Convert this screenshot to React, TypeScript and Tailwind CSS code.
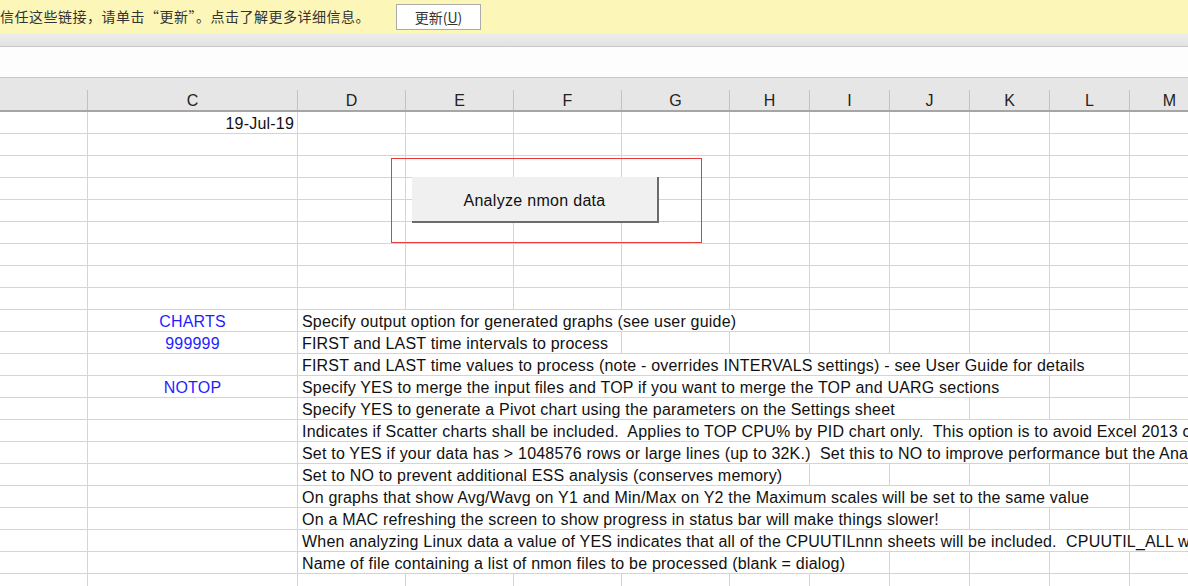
import React from 'react'

const COLS = ['', 'C', 'D', 'E', 'F', 'G', 'H', 'I', 'J', 'K', 'L', 'M']

const SPAN: Record<number, string> = {
  3: 'col-span-3',
  5: 'col-span-5',
  6: 'col-span-6',
  7: 'col-span-7',
  8: 'col-span-8',
  9: 'col-span-9',
  10: 'col-span-10',
}

interface Row {
  c?: string
  date?: boolean
  d?: string
  span?: number
}

const rows: Row[] = [
  { c: '19-Jul-19', date: true },
  {},
  {},
  {},
  {},
  {},
  {},
  {},
  {},
  { c: 'CHARTS', d: 'Specify output option for generated graphs (see user guide)', span: 5 },
  { c: '999999', d: 'FIRST and LAST time intervals to process', span: 3 },
  { d: 'FIRST and LAST time values to process (note - overrides INTERVALS settings) - see User Guide for details', span: 9 },
  { c: 'NOTOP', d: 'Specify YES to merge the input files and TOP if you want to merge the TOP and UARG sections', span: 8 },
  { d: 'Specify YES to generate a Pivot chart using the parameters on the Settings sheet', span: 7 },
  { d: 'Indicates if Scatter charts shall be included.  Applies to TOP CPU% by PID chart only.  This option is to avoid Excel 2013 crashing', span: 10 },
  { d: 'Set to YES if your data has > 1048576 rows or large lines (up to 32K.)  Set this to NO to improve performance but the Analyser may fail', span: 10 },
  { d: 'Set to NO to prevent additional ESS analysis (conserves memory)', span: 5 },
  { d: 'On graphs that show Avg/Wavg on Y1 and Min/Max on Y2 the Maximum scales will be set to the same value', span: 9 },
  { d: 'On a MAC refreshing the screen to show progress in status bar will make things slower!', span: 7 },
  { d: 'When analyzing Linux data a value of YES indicates that all of the CPUUTILnnn sheets will be included.  CPUUTIL_ALL will always be included', span: 10 },
  { d: 'Name of file containing a list of nmon files to be processed (blank = dialog)', span: 6 },
  {},
]

const cell = 'h-[22px] border-r border-b border-[#d4d4d4] leading-[21px] pt-[1px] whitespace-pre overflow-hidden tracking-[0.2px]'

function SheetRow({ row }: { row: Row }) {
  const span = row.span ?? 1
  const rest = 10 - span
  return (
    <>
      <div className={cell} />
      <div
        className={
          cell +
          (row.date ? ' text-right pr-[3px] text-[#111]' : ' text-center text-[#1f1fff]')
        }
      >
        {row.c}
      </div>
      <div className={cell + ' pl-[4px] text-[#111] ' + (SPAN[span] ?? '')}>
        {row.d}
      </div>
      {Array.from({ length: rest }).map((_, i) => (
        <div key={i} className={cell} />
      ))}
    </>
  )
}

export default function App() {
  return (
    <div className="w-[1188px] h-[586px] overflow-hidden bg-white font-['Liberation_Sans',Arial,sans-serif] text-[16px]">
      {/* message bar */}
      <div className="h-[33px] bg-[#fcf6b9] flex items-center font-['Noto_Sans_CJK_SC',sans-serif] text-[14px] text-[#333]">
        <span className="w-[396px] whitespace-nowrap tracking-[0.5px]">
          信任这些链接，请单击“更新”。点击了解更多详细信息。
        </span>
        <button className="w-[85px] h-[26px] bg-white border border-[#ababab] text-[14px] text-[#333] leading-[24px]">
          更新(<span className="underline">U</span>)
        </button>
      </div>
      <div className="h-[14px] bg-gradient-to-b from-[#eeeeee] to-[#e2e2e2] border-b border-[#c8c8c8]" />
      <div className="h-[31px] bg-[#fdfdfd] border-b border-[#c8c8c8]" />

      {/* column headers */}
      <div className="w-[1210px] h-[34px] bg-[#e6e6e6] border-b-2 border-[#a6a6a6] grid grid-cols-[88px_210px_108px_108px_108px_108px_80px_80px_80px_80px_80px_80px] text-[#222]">
        {COLS.map((c, i) => (
          <div key={i} className="pt-[12px]">
            <div className="h-[20px] border-r border-[#c2c2c2] text-center pt-[2px] leading-[18px]">
              {c}
            </div>
          </div>
        ))}
      </div>

      {/* cells */}
      <div className="relative w-[1210px]">
        <div className="grid grid-cols-[88px_210px_108px_108px_108px_108px_80px_80px_80px_80px_80px_80px]">
          {rows.map((r, i) => (
            <SheetRow key={i} row={r} />
          ))}
        </div>

        {/* form control over the sheet */}
        <div className="absolute left-[391px] top-[46px] w-[311px] h-[85px] border border-[#e83c3c]" />
        <button className="absolute left-[412px] top-[65px] w-[247px] h-[46px] bg-[#f0f0f0] border-r-2 border-b-2 border-[#6b6b6b] text-[16px] text-[#111] leading-[47px] tracking-[0.3px]">
          Analyze nmon data
        </button>
      </div>
    </div>
  )
}
